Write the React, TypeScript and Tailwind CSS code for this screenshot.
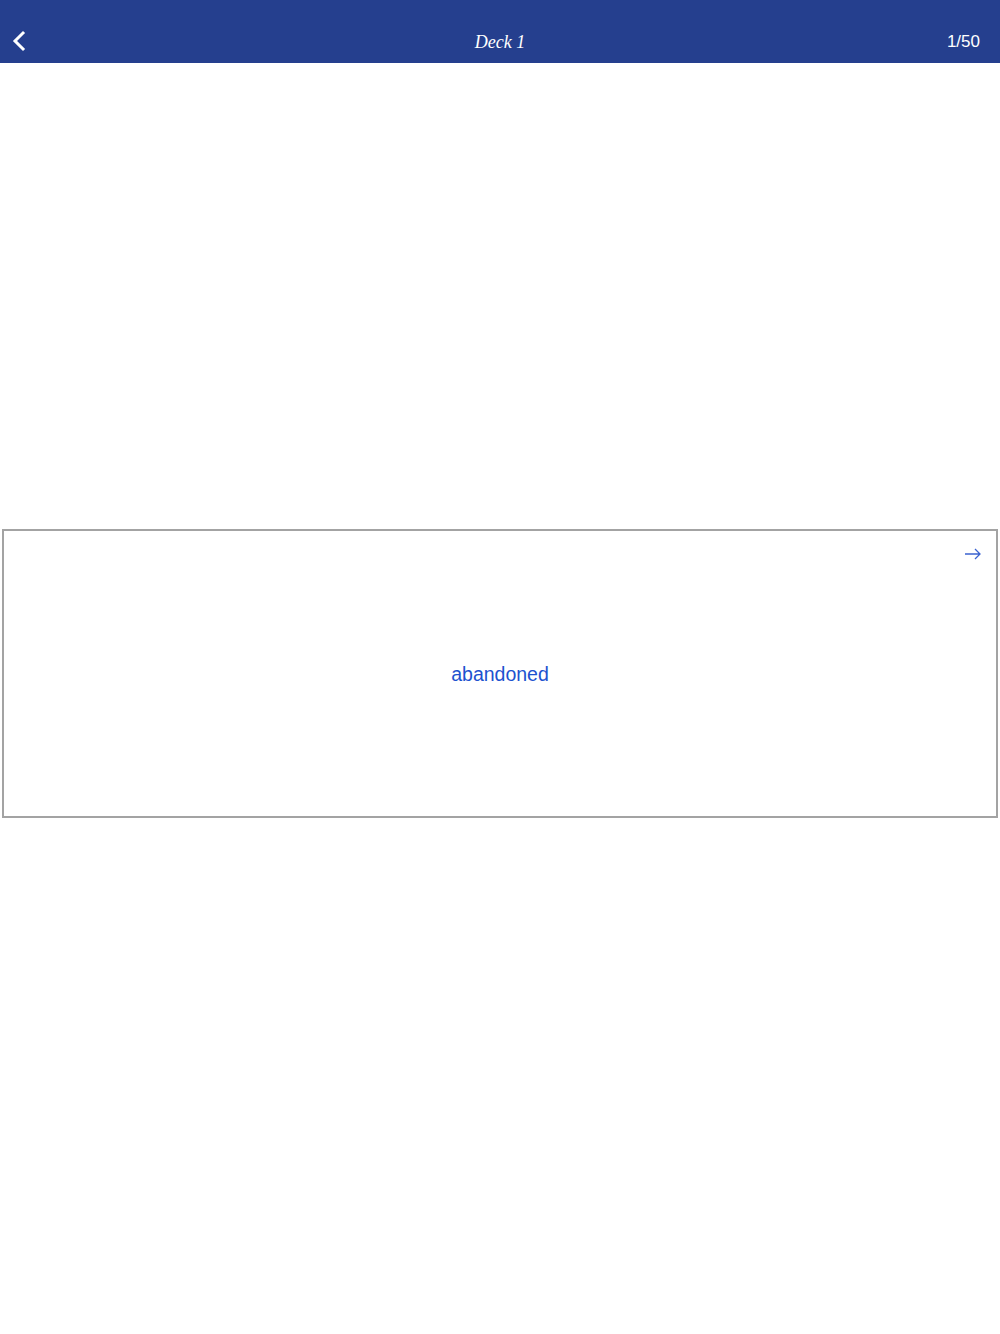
import React from "react";

export default function App() {
  return (
    <div className="w-[1000px] h-[1334px] bg-white flex flex-col" style={{ fontFamily: "'Liberation Sans', Arial, sans-serif" }}>
      <div className="h-[63px] bg-[#253f8e] grid grid-cols-[1fr_auto_1fr] items-end pb-[10px] px-[12px] shrink-0">
        <div className="flex items-end">
          <svg width="16" height="22" viewBox="0 0 16 22" className="mb-[1px]">
            <path d="M11 3 L3 11 L11 19" stroke="white" strokeWidth="3" fill="none" strokeLinecap="square" />
          </svg>
        </div>
        <div className="text-center text-white text-[18px] italic leading-[22px]" style={{ fontFamily: "'Liberation Serif', 'Times New Roman', serif" }}>
          Deck 1
        </div>
        <div className="text-right text-white text-[17px] leading-[22px] pr-[8px]">1/50</div>
      </div>
      <div className="mt-[466px] mx-[2px] h-[289px] border-2 border-[#a3a3a3] relative flex items-center justify-center">
        <svg width="18" height="12" viewBox="0 0 18 12" className="absolute right-[14px] top-[17px]">
          <path d="M1 6 H16 M11 1 L16 6 L11 11" stroke="#3b63d0" strokeWidth="1.3" fill="none" />
        </svg>
        <span className="text-[#1d52cf] text-[19.5px] mt-[3px]">abandoned</span>
      </div>
    </div>
  );
}
